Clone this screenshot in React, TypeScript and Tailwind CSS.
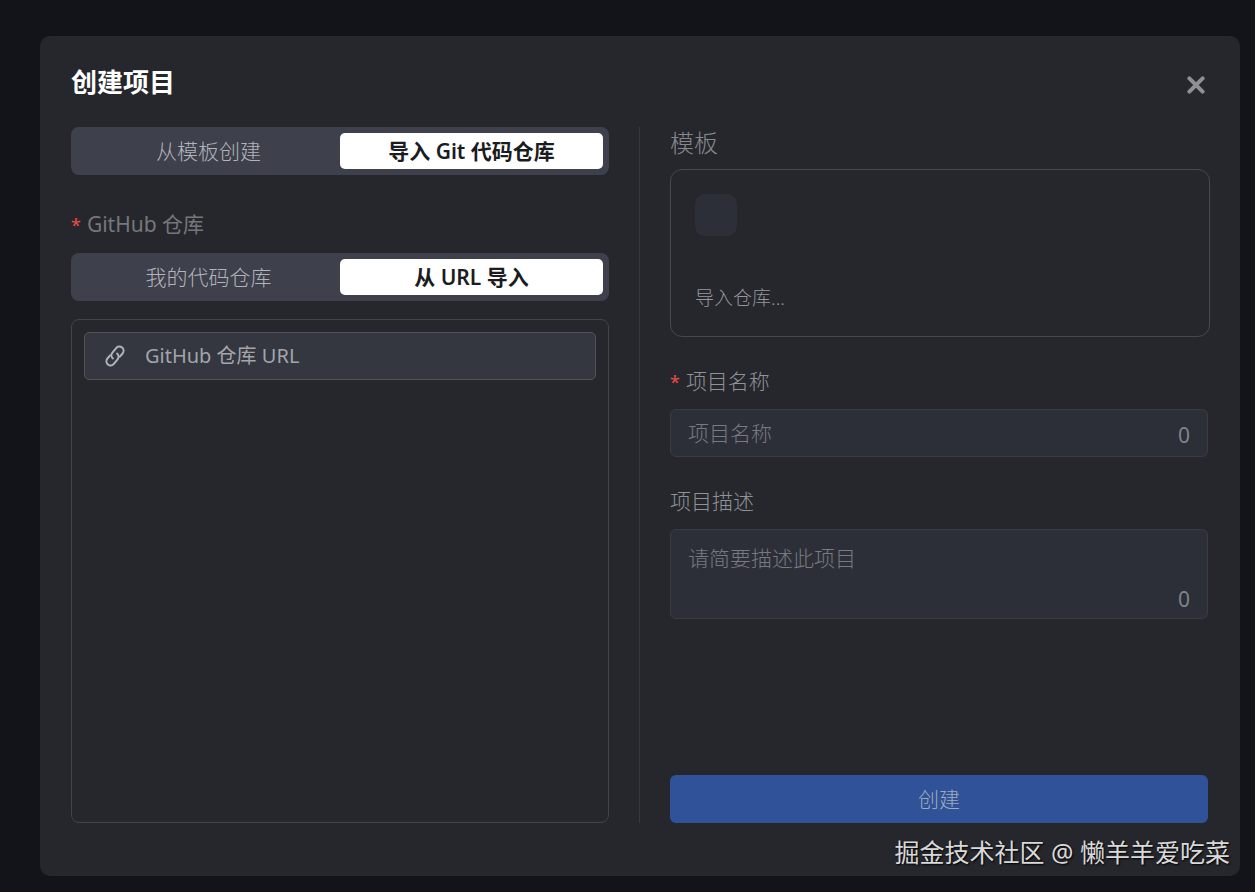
import { useState } from "react";

type SegmentedProps = {
  label: string;
  options: string[];
  value: string;
  onChange: (value: string) => void;
};

function Segmented({ label, options, value, onChange }: SegmentedProps) {
  return (
    <div role="group" aria-label={label} className="flex h-12 rounded-lg bg-[#3e404b] p-1.5">
      {options.map((option) => (
        <button
          key={option}
          type="button"
          aria-pressed={option === value}
          onClick={() => onChange(option)}
          className={
            option === value
              ? "flex flex-1 items-center justify-center rounded-[5px] bg-white text-[21px] leading-8 font-semibold text-[#1b1c20]"
              : "flex flex-1 items-center justify-center rounded-[5px] text-[21px] leading-8 font-light text-[#b2b4bd]"
          }
        >
          {option}
        </button>
      ))}
    </div>
  );
}

function Required() {
  return <span className="mr-1.5 text-[18px] leading-none font-medium text-[#e04a45]">*</span>;
}

function LinkIcon() {
  return (
    <svg viewBox="0 0 24 24" className="size-6 shrink-0 text-[#b0b3ba]" fill="none" stroke="currentColor" strokeWidth="2" strokeLinecap="round" aria-hidden="true">
      <g transform="rotate(-50 12 12)">
        <path d="M14.6 16.2h4.2a4.2 4.2 0 0 0 0-8.4h-5.8a4.2 4.2 0 0 0-4.2 4.2" />
        <path d="M9.4 7.8H5.2a4.2 4.2 0 0 0 0 8.4H11a4.2 4.2 0 0 0 4.2-4.2" />
      </g>
    </svg>
  );
}

export default function App() {
  const [source, setSource] = useState("导入 Git 代码仓库");
  const [repoMode, setRepoMode] = useState("从 URL 导入");
  const [name, setName] = useState("");
  const [description, setDescription] = useState("");

  return (
    <div className="flex min-h-screen bg-[#131419] pt-9 pr-[15px] pb-4 pl-10 font-['Noto_Sans','Noto_Sans_CJK_SC',sans-serif] text-[21px] leading-8">
      <main className="relative flex flex-1 flex-col rounded-[10px] bg-[#26272c] pr-8 pb-[53px] pl-[31px]">
        <header className="flex h-[91px] items-start justify-between pt-[30px]">
          <h1 className="text-[26px] leading-8 font-bold text-white">创建项目</h1>
          <button type="button" aria-label="关闭" className="mt-[7px] flex size-6 items-center justify-center text-[#8e9095]">
            <svg viewBox="0 0 18 18" className="size-[18px]" stroke="currentColor" strokeWidth="4" strokeLinecap="round" aria-hidden="true">
              <path d="M2.4 2.4 15.6 15.6M15.6 2.4 2.4 15.6" />
            </svg>
          </button>
        </header>

        <div className="flex flex-1 gap-[30px]">
          <section className="flex flex-1 flex-col">
            <Segmented label="创建方式" options={["从模板创建", "导入 Git 代码仓库"]} value={source} onChange={setSource} />
            <h2 className="mt-[33px] mb-[13px] text-[#75777c]">
              <Required />
              GitHub 仓库
            </h2>
            <Segmented label="GitHub 仓库" options={["我的代码仓库", "从 URL 导入"]} value={repoMode} onChange={setRepoMode} />
            <div className="mt-[18px] flex-1 rounded-lg border border-[#42444a] p-3">
              <div className="flex h-12 items-center rounded-[5px] border border-[#50535a] bg-[#34373f] px-[18px]">
                <LinkIcon />
                <input
                  type="url"
                  aria-label="GitHub 仓库 URL"
                  placeholder="GitHub 仓库 URL"
                  className="ml-[18px] min-w-0 flex-1 bg-transparent text-xl leading-8 text-[#d4d6db] outline-none placeholder:text-[#a2a5ac]"
                />
              </div>
            </div>
          </section>

          <div className="w-px bg-[#37383d]" />

          <form className="flex flex-1 flex-col" onSubmit={(event) => event.preventDefault()}>
            <h2 className="text-2xl leading-8 font-light text-[#85898e]">模板</h2>
            <div className="mt-2.5 -mr-0.5 flex h-[168px] flex-col justify-between rounded-xl border border-[#46484d] px-6 pt-6 pb-[22px]">
              <div className="size-[42px] rounded-[10px] bg-[#2c2f38]" />
              <p className="text-[19px] leading-8 font-light text-[#95979c]">导入仓库...</p>
            </div>

            <label htmlFor="project-name" className="mt-7 font-light text-[#909297]">
              <Required />
              项目名称
            </label>
            <div className="mt-3 flex h-12 items-center rounded-md border border-[#393c43] bg-[#2c2f38] px-[17px]">
              <input
                id="project-name"
                value={name}
                onChange={(event) => setName(event.target.value)}
                placeholder="项目名称"
                className="min-w-0 flex-1 bg-transparent font-light text-[#d4d6db] outline-none placeholder:text-[#777a80]"
              />
              <span className="pt-1 text-[#80838b]">{name.length}</span>
            </div>

            <label htmlFor="project-description" className="mt-7 font-light text-[#909297]">
              项目描述
            </label>
            <div className="mt-3 flex h-[90px] rounded-md border border-[#393c43] bg-[#2c2f38] px-[17px] pt-3">
              <textarea
                id="project-description"
                value={description}
                onChange={(event) => setDescription(event.target.value)}
                placeholder="请简要描述此项目"
                className="min-w-0 flex-1 resize-none bg-transparent font-light text-[#d4d6db] outline-none placeholder:text-[#777a80]"
              />
              <span className="self-end pb-[3px] text-[#80838b]">{description.length}</span>
            </div>

            <button type="submit" disabled className="mt-auto h-12 rounded-md bg-[#2f5298] font-light text-[#9fabb8]">
              创建
            </button>
          </form>
        </div>

        <p className="absolute right-2.5 bottom-2 text-[25px] leading-8 text-[#d9d9da] [text-shadow:1px_1px_2px_#000]">
          掘金技术社区 @ 懒羊羊爱吃菜
        </p>
      </main>
    </div>
  );
}
